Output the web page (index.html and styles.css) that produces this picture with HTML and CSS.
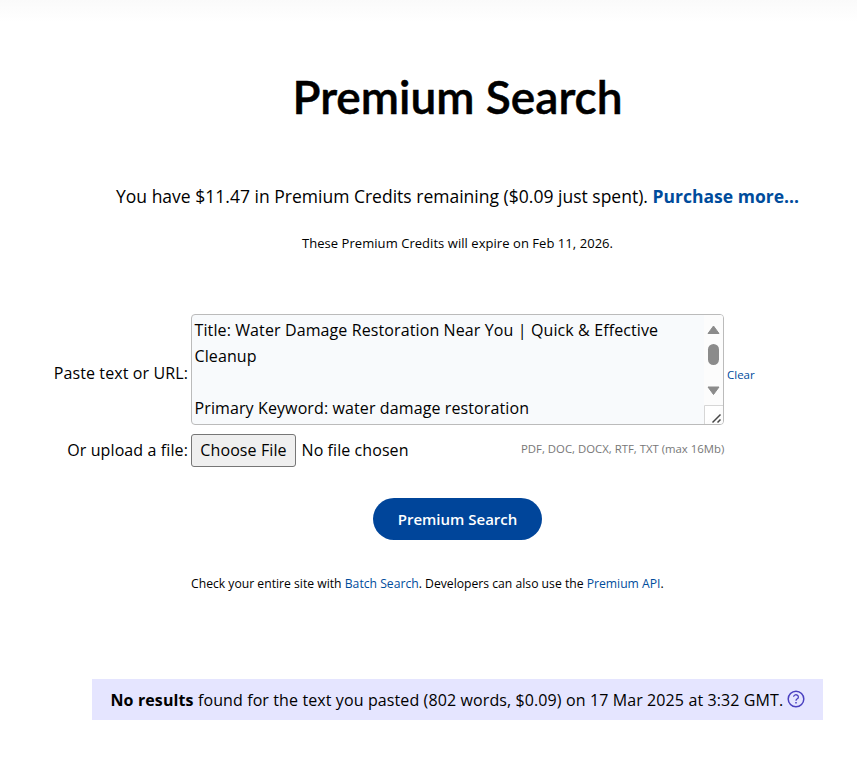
FILE: index.html
```
<!DOCTYPE html>
<html lang="en"><head><meta charset="utf-8"><title>Premium Search</title><link rel="stylesheet" href="styles.css"></head>
<body>
<main>
<h1>Premium Search</h1>
<p class="credits">You have $11.47 in Premium Credits remaining ($0.09 just spent). <a href="#"><b>Purchase more...</b></a></p>
<p class="expiry">These Premium Credits will expire on Feb 11, 2026.</p>
<form>
<div class="row paste"><label>Paste text or URL:</label>
<div class="box"><div class="text">Title: Water Damage Restoration Near You | Quick &amp; Effective<br>Cleanup<br><br>Primary Keyword: water damage restoration</div>
<svg class="scroll" width="19" height="109" viewBox="0 0 19 109"><path fill="#fcfcfc" d="M0 0h19v109H0z"/><path fill="#8b8b8b" stroke="#8b8b8b" stroke-linejoin="round" d="M4 18.500l5.500-7.500L15 18.500zM4 72h11l-5.500 7.500z"/><rect x="4" y="29" width="11" height="21" rx="5.500" fill="#8b8b8b"/><path fill="#fff" stroke="#d6d6d6" d="M.5 109V90.500H19"/><path stroke="#444" stroke-width="1.500" d="M8.500 107.500l8-8M13.500 107.500l3-3"/></svg></div>
<a class="clear" href="#">Clear</a></div>
<div class="row upload"><label>Or upload a file:</label><button type="button" class="choose">Choose File</button><span class="none">No file chosen</span><span class="types">PDF, DOC, DOCX, RTF, TXT (max 16Mb)</span></div>
<button type="button" class="submit">Premium Search</button>
</form>
<p class="note">Check your entire site with <a href="#">Batch Search</a>. Developers can also use the <a href="#">Premium API</a>.</p>
<div class="result"><span><b>No results</b> found for the text you pasted (802 words, $0.09) on 17 Mar 2025 at 3:32 GMT.</span><svg width="18" height="18" viewBox="0 0 18 18" fill="none" stroke="#4a40c0" stroke-width="1.500"><circle cx="9" cy="9" r="7.800"/><path stroke-width="1.300" d="M6.600 6.800a2.400 2.200 0 1 1 3.700 2Q9 9.600 9 10.700"/><path d="M9 12v1.500"/></svg></div>
</main>
</body></html>
```
FILE: styles.css
```
*{box-sizing:border-box}
body{margin:0;height:777px;overflow:hidden;background:linear-gradient(#fafafa,#fff 22px);font:16px/26px "Open Sans",sans-serif;letter-spacing:.11px;color:#000}
main{display:flex;flex-direction:column;width:857px}
a{color:#004c9c;text-decoration:none}
h1{font:600 46px/60px Lato,sans-serif;letter-spacing:0;-webkit-text-stroke:.5px #000;margin:67px 0 0 292.500px;white-space:nowrap}
p{margin:0;white-space:nowrap}
.credits{font-size:17.500px;letter-spacing:.01px;margin:56px 0 0 116px}
.expiry{font-size:13px;letter-spacing:.05px;margin:21px 0 0 302px}
form{display:flex;flex-direction:column;margin-top:58px}
.row{display:flex;align-items:center;white-space:nowrap}
label{width:188px;text-align:right;margin-right:3px}
.paste{height:111px}
.paste label{padding-top:7px}
.box{width:533px;height:111px;border:1px solid #bbb;border-radius:4px;background:#f8fafc;display:flex;justify-content:space-between;overflow:hidden}
.text{padding:2px 0 0 2.500px}
.scroll{flex:none}
.clear{font-size:11.500px;letter-spacing:0;margin:10px 0 0 3px}
.upload{margin-top:9px;height:33px}
.upload label,.none{padding-bottom:2px}
.types{padding-bottom:4px}
.choose{font:inherit;letter-spacing:inherit;width:105px;height:33px;padding:0 0 2px;border:1px solid #767676;border-radius:3px;background:#efefef;color:#000}
.none{margin-left:5.500px;width:219.500px;letter-spacing:.08px}
.types{font-size:11.360px;letter-spacing:0;color:#777}
.submit{font:600 15px "Open Sans",sans-serif;width:169px;height:42px;margin:31px 0 0 373px;border:0;border-radius:21px;background:#00459a;color:#fff}
.note{font-size:12.180px;letter-spacing:0;margin:31px 0 0 191px}
.result{display:flex;align-items:center;margin:82px 0 0 92px;width:731px;height:41px;padding-left:18.500px;background:#e5e5ff;white-space:nowrap;gap:4px}
.result svg{margin-top:-2px}
```
